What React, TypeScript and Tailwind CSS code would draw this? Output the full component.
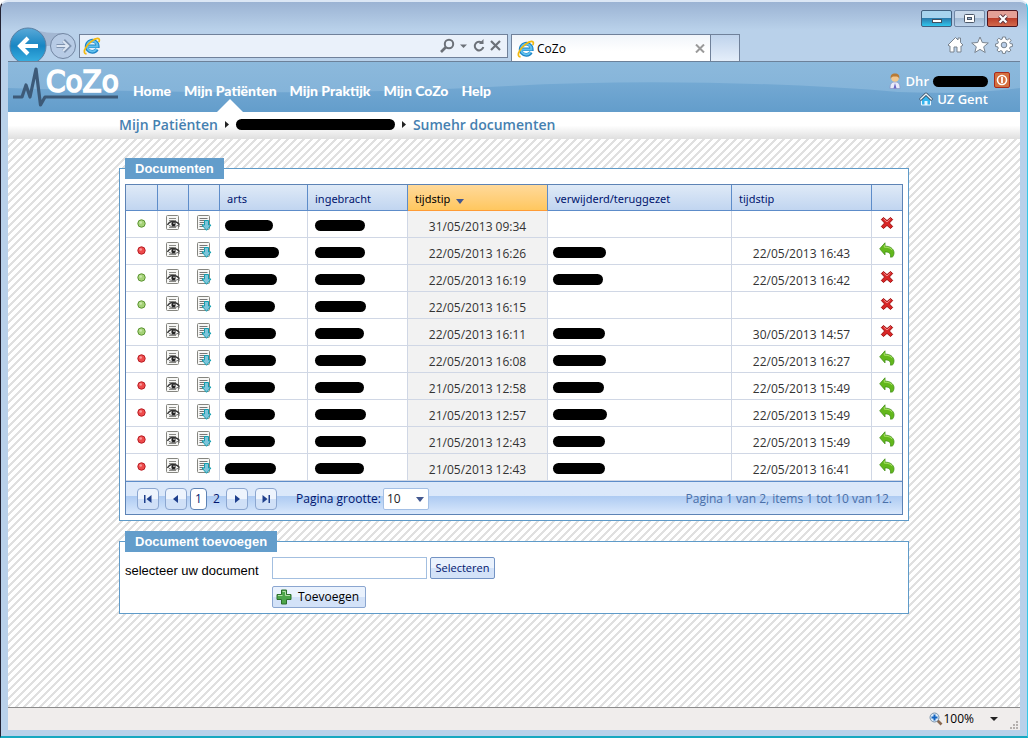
import { ReactNode } from "react";

const docs = [
  { active: true, arts: 48, by: 50, time: "31/05/2013 09:34", removed: 0, removedTime: "" },
  { active: false, arts: 54, by: 50, time: "22/05/2013 16:26", removed: 53, removedTime: "22/05/2013 16:43" },
  { active: true, arts: 52, by: 50, time: "22/05/2013 16:19", removed: 50, removedTime: "22/05/2013 16:42" },
  { active: true, arts: 50, by: 51, time: "22/05/2013 16:15", removed: 0, removedTime: "" },
  { active: true, arts: 51, by: 49, time: "22/05/2013 16:11", removed: 52, removedTime: "30/05/2013 14:57" },
  { active: false, arts: 51, by: 51, time: "22/05/2013 16:08", removed: 53, removedTime: "22/05/2013 16:27" },
  { active: false, arts: 50, by: 49, time: "21/05/2013 12:58", removed: 51, removedTime: "22/05/2013 15:49" },
  { active: false, arts: 50, by: 51, time: "21/05/2013 12:57", removed: 54, removedTime: "22/05/2013 15:49" },
  { active: false, arts: 50, by: 51, time: "21/05/2013 12:43", removed: 52, removedTime: "22/05/2013 15:49" },
  { active: false, arts: 51, by: 49, time: "21/05/2013 12:43", removed: 52, removedTime: "22/05/2013 16:41" },
];

const Redacted = ({ width }: { width: number }) => (
  <span className="block h-[11px] rounded-full bg-black" style={{ width }} />
);

const IeIcon = () => (
  <svg width="18" height="18" viewBox="0 0 18 18" fill="none" className="shrink-0">
    <path d="M14 12.2a5.6 5.6 0 1 1 .8-3H5.2" stroke="#1d84c6" strokeWidth="3.600" />
    <path d="M13.6 12a5.2 5.2 0 1 1 .8-2.6H5.2" stroke="#5fc0ee" strokeWidth="2" />
    <path d="M3.6 16.6C.8 17 .6 14 3 10.300 5.600 6 11 1.600 14.600 1.400c2-.1 2.200 1.600 1.200 3.800" stroke="#f2b90f" strokeWidth="1.700" />
  </svg>
);

const ViewIcon = () => (
  <svg width="16" height="16" viewBox="0 0 16 16" fill="none">
    <rect x="1.500" y=".5" width="12" height="14" rx="1" fill="#f7f7f5" stroke="#85857f" />
    <path d="M4 3.500h7M4 5.500h7M4 12.500h7" stroke="#8b8b87" />
    <path d="M2.500 10C4 7 6 6.200 8.500 6.500c2.500 0 4.500 1 6 3.200" stroke="#333" strokeWidth="1.400" />
    <path d="M4 10.500c3 1.500 6 1.500 10-.5v2" stroke="#666" />
    <circle cx="8.500" cy="9" r="2.200" fill="#222" />
    <circle cx="9" cy="8.300" r=".7" fill="#fff" />
  </svg>
);

const DownloadIcon = () => (
  <svg width="16" height="16" viewBox="0 0 16 16" fill="none">
    <rect x="1.500" y=".5" width="12" height="14" rx="1" fill="#f7f7f5" stroke="#85857f" />
    <path d="M3.500 3.500h8M3.500 5.500h8M3.500 7.500h5M3.500 9.500h4M3.500 11.500h4" stroke="#777" />
    <path d="M8.500 5.500h4v4.500h2.500l-4.500 5.300L6 10h2.500z" fill="#7fc4da" stroke="#0f9fb0" />
  </svg>
);

const DeleteIcon = () => (
  <svg width="14" height="14" viewBox="0 0 14 14">
    <path
      d="M3.500 1.500 7 4.600l3.500-3.100 2.200 2L9.400 7l3.300 3.500-2.200 2L7 9.400l-3.500 3.100-2.200-2L4.600 7 1.300 3.500z"
      fill="#d92626"
      stroke="#a11212"
      strokeLinejoin="round"
    />
    <path d="M3.500 2.800 7 6l3.500-3.200" stroke="#f08a8a" fill="none" />
  </svg>
);

const RestoreIcon = () => (
  <svg width="16" height="16" viewBox="0 0 16 16">
    <path
      d="M6 .8v3.400c5.500-.2 8.800 3 9 6.300.1 2-.7 3.600-1.800 4.700-.2-.2-1-.2-1.700 0 .6-3.500-1.300-5.400-5.500-5.300v3L.7 6.800z"
      fill="#63b81c"
      stroke="#44901a"
      strokeWidth=".8"
      strokeLinejoin="round"
    />
    <path d="M5.300 2.800v2.400c4-.2 6.500 1 8 3" stroke="#a9e063" fill="none" />
  </svg>
);

const StatusDot = ({ active }: { active: boolean }) => (
  <svg width="9" height="9" viewBox="0 0 9 9">
    <circle cx="4.500" cy="4.500" r="3.700" fill={active ? "#a5d277" : "#ee4b4b"} stroke={active ? "#5c9433" : "#b81f26"} />
    <circle cx="3.700" cy="3.500" r="1.300" fill={active ? "#cde8ae" : "#f89b9b"} />
  </svg>
);

const Crumb = () => (
  <svg width="4" height="7" viewBox="0 0 4 7" className="shrink-0">
    <path d="M0 0 4 3.500 0 7z" fill="#222" />
  </svg>
);

const PagerButton = ({ label, children }: { label: string; children: ReactNode }) => (
  <button
    aria-label={label}
    className="flex h-[22px] w-[22px] items-center justify-center rounded-sm border border-[#8ba6d0] bg-linear-to-b from-[#eef4fd] from-50% to-[#d0e0f7] to-50% text-[#1f3f8c]"
  >
    <svg width="8" height="8" viewBox="0 0 8 8" fill="currentColor">
      {children}
    </svg>
  </button>
);

const headCell = "border-r border-b border-[#5d8cc9] bg-linear-to-b from-[#dfeaf7] to-[#c1d5f0] px-[7px] pt-[3px] text-left font-normal text-[#00156e] last:border-r-0";
const cell = "border-r border-b border-[#d0d7e5] p-0 last:border-r-0";

const TitleBar = () => (
  <div className="flex h-[26px] justify-end gap-0.5 pt-2 pr-0.5">
    <button aria-label="Minimaliseren" className="flex h-[17px] w-[31px] items-center justify-center rounded-xs border border-[#41607f] bg-linear-to-b from-[#a7d3ee] from-45% via-[#2a76a8] via-45% to-[#2fc5ec] pt-1">
      <span className="h-1 w-2.5 border border-[#41505f] bg-white" />
    </button>
    <button aria-label="Maximaliseren" className="flex h-[17px] w-[31px] items-center justify-center rounded-xs border border-[#7187a5] bg-linear-to-b from-[#c8d8ea] from-45% via-[#a0b8d2] via-45% to-[#bdd2ea]">
      <svg width="11" height="9" viewBox="0 0 11 9">
        <rect x=".5" y=".5" width="10" height="8" rx="1" fill="#fff" stroke="#4b5768" />
        <rect x="3.500" y="3.500" width="4" height="2" fill="#9cb4cf" stroke="#4b5768" />
      </svg>
    </button>
    <button aria-label="Sluiten" className="flex h-[17px] w-[31px] items-center justify-center rounded-xs border border-[#4c1520] bg-linear-to-b from-[#e4a097] from-45% via-[#b93a28] via-45% to-[#d3694c]">
      <svg width="12" height="10" viewBox="0 0 12 10">
        <path d="m2.500 1.500 7 7m0-7-7 7" stroke="#5b3640" strokeWidth="4" />
        <path d="m2.500 1.500 7 7m0-7-7 7" stroke="#fff" strokeWidth="2.200" />
      </svg>
    </button>
  </div>
);

const BrowserBar = () => (
  <div className="flex h-[28px] items-start">
    <svg width="71" height="35" viewBox="0 0 71 35" className="-mt-[7px] shrink-0">
      <defs>
        <linearGradient id="back" x2="0" y2="1">
          <stop offset="0" stopColor="#5aa9d8" />
          <stop offset=".5" stopColor="#1886c3" />
          <stop offset="1" stopColor="#3cb4e4" />
        </linearGradient>
      </defs>
      <path d="M22 1c12 5 22 5 33 5v13H22z" fill="#a3b7d2" />
      <circle cx="20" cy="19" r="18" fill="url(#back)" stroke="#5b7fa3" />
      <circle cx="55" cy="19" r="12.500" fill="#b7cbe5" stroke="#7286a2" />
      <path d="M30 19H13m7-8-8 8 8 8" stroke="#fff" strokeWidth="4" fill="none" />
      <path d="M48.500 19H61m-5.500-5.500L61 19l-5.500 5.500" stroke="#7e92ae" strokeWidth="4" fill="none" />
      <path d="M48.500 19H60m-5-5 5.200 5-5.200 5" stroke="#dce6f3" strokeWidth="2" fill="none" />
    </svg>
    <div className="flex h-6 min-w-0 flex-1 items-center border border-[#70819a] bg-[#eaf1fa] pr-[5px] pl-[3px]">
      <IeIcon />
      <input aria-label="Adres" className="min-w-0 flex-1 bg-transparent px-1 text-xs outline-none" />
      <svg width="62" height="16" viewBox="0 0 62 16" fill="none" stroke="#6c7178" strokeWidth="2">
        <circle cx="9" cy="6" r="4.200" />
        <path d="m6 9-5 5" strokeWidth="2.600" />
        <path d="M20 6.500h7l-3.500 3.500z" fill="#6c7178" stroke="none" />
        <path d="M42.500 5.500A4.300 4.300 0 1 0 43.300 9" />
        <path d="M39 6h4.500V1z" fill="#6c7178" stroke="none" />
        <path d="m51 3 9 9m0-9-9 9" strokeWidth="2.200" />
      </svg>
    </div>
    <div className="ml-[3px] flex h-7 w-[200px] items-center border border-b-0 border-[#70819a] bg-linear-to-b from-[#f1f5fa] to-white to-60% px-[5px]">
      <IeIcon />
      <span className="ml-0.5 flex-1 font-['Open_Sans',sans-serif] text-xs text-black">CoZo</span>
      <button aria-label="Tabblad sluiten">
        <svg width="10" height="9" viewBox="0 0 10 9" stroke="#9a9a9a" strokeWidth="2">
          <path d="m1 .5 8 8m0-8-8 8" />
        </svg>
      </button>
    </div>
    <button aria-label="Nieuw tabblad" className="-ml-px h-7 w-[30px] border border-b-0 border-[#70819a] bg-linear-to-b from-[#bfd3ec] to-[#e6effa]" />
    <div className="flex w-[280px] justify-end pt-0.5 pr-[7px]">
      <svg width="66" height="18" viewBox="0 0 66 18" fill="#fff" stroke="#78838f" strokeLinejoin="round">
        <path d="m1 9 7.500-7.500 2.500 2.500v-2h2.500v4.500L16 9l-1.500 1H14v6h-4v-5H7v5H3v-6H2z" />
        <path d="m33 1 2.300 5.500 6 .5-4.600 3.800 1.500 5.700L33 13.400l-5.200 3.100 1.500-5.700L24.700 7l6-.5z" />
        <g transform="translate(57 9)">
          <path d="M-1.500-8h3l.4 2.300 1.500.6 1.900-1.400L7.100-4.600 5.700-2.700l.5 1.300 2.200.3v2.600l-2.200.4-.6 1.500 1.300 1.800L5 7 3.100 5.700l-1.400.6L1.300 8.400h-2.700l-.4-2.200-1.500-.6L-5.100 7-7 5.100l1.300-1.900-.6-1.400-2.100-.3v-2.600l2.200-.4.6-1.500L-7-4.900-5.100-6.800l1.900 1.400 1.400-.5z" />
          <circle r="2.800" fill="#b8cde8" />
        </g>
      </svg>
    </div>
  </div>
);

const SiteHeader = () => (
  <header className="relative flex h-[50px] items-start justify-between bg-linear-to-b from-[#8cb9dc] to-[#7fb0d7] font-['Lato',sans-serif] text-white">
    <svg className="absolute inset-0 h-full w-full" viewBox="0 0 1012 50" preserveAspectRatio="none">
      <defs>
        <linearGradient id="wave" x2="0" y2="1">
          <stop offset="0" stopColor="#74a9d3" />
          <stop offset="1" stopColor="#639dcb" />
        </linearGradient>
      </defs>
      <path d="M0 26C200 32 360 32 500 24s300-2 390 6c50 2 90 0 122-4v24H0z" fill="url(#wave)" />
    </svg>
    <div className="relative flex h-full">
      <svg width="112" height="50" viewBox="0 0 112 50" className="mr-[13px] shrink-0">
        <path d="M5 35h9l4-12 4 12 6-28 4.500 36 4.500-8h73" stroke="#3d5a78" strokeWidth="3.200" fill="none" strokeLinejoin="round" />
        <text x="38" y="30" fontFamily="'DejaVu Sans Condensed', 'DejaVu Sans', sans-serif" fontSize="31" fill="#fff" stroke="#fff" strokeWidth="1.600">
          CoZo
        </text>
      </svg>
      <nav className="pt-5">
        <ul className="flex h-[30px] gap-[13px] text-sm leading-[18px] font-black">
          <li><a href="#home">Home</a></li>
          <li className="relative">
            <a href="#patienten">Mijn Patiënten</a>
            <svg width="26" height="13" viewBox="0 0 26 13" className="absolute bottom-0 left-1/2 -translate-x-1/2">
              <path d="M0 13 13 0l13 13z" fill="#fff" />
            </svg>
          </li>
          <li><a href="#praktijk">Mijn Praktijk</a></li>
          <li><a href="#cozo">Mijn CoZo</a></li>
          <li><a href="#help">Help</a></li>
        </ul>
      </nav>
    </div>
    <div className="relative flex gap-1.5 pt-2.5 pr-2.5 font-['Open_Sans',sans-serif] text-[13px] leading-[18px] font-semibold">
      <div>
        <div className="flex items-center justify-end gap-1">
          <svg width="14" height="16" viewBox="0 0 14 16">
            <path d="M2 15.500c0-4 1-6.500 5-6.500s5 2.500 5 6.500z" fill="#e8ebfa" stroke="#8993c4" strokeWidth=".7" />
            <path d="m7 10-1.500 5.500h3z" fill="#6b65c4" />
            <circle cx="7" cy="5" r="3.800" fill="#f3c78e" />
            <path d="M2.800 6C2 2 4 .5 7 .5s5 1.500 4.200 5.500c-.7-2-1.200-2.500-4.200-2.500S3.500 4 2.800 6z" fill="#b87a35" />
          </svg>
          Dhr
          <Redacted width={55} />
        </div>
        <div className="flex items-center justify-end gap-1">
          <svg width="14" height="14" viewBox="0 0 14 14" strokeLinejoin="round">
            <path d="M2.500 7.500V13h9V7.500L7 3z" fill="#35b4ee" stroke="#e8f6ff" />
            <path d="M1 8 7 2l6 6" fill="none" stroke="#3a4a5c" strokeWidth="3" />
            <path d="M1.300 7.500 7 2l5.700 5.500" fill="none" stroke="#eaf7ff" strokeWidth="1.400" />
            <path d="M5.500 13V9h3v4z" fill="#e8f6ff" />
          </svg>
          <a href="#gent">UZ Gent</a>
        </div>
      </div>
      <button aria-label="Afmelden" className="h-4 w-4">
        <svg width="16" height="16" viewBox="0 0 16 16" fill="none">
          <rect x=".5" y=".5" width="15" height="15" rx="1.500" fill="#d4703f" stroke="#a92a1c" />
          <circle cx="8" cy="8" r="4.500" stroke="#fff" strokeWidth="1.600" />
          <path d="M8 5v6" stroke="#fff" strokeWidth="1.800" />
        </svg>
      </button>
    </div>
  </header>
);

const Documents = () => (
  <fieldset className="border border-[#5f9bc9] bg-white px-[5px] pb-[5px]">
    <legend className="bg-[#639dcb] px-2.5 font-['Liberation_Sans',sans-serif] text-[13px] leading-[21px] font-bold text-white">Documenten</legend>
    <div className="mt-[5px] border border-[#5d83b5]">
      <table className="w-full table-fixed border-separate border-spacing-0 font-['Open_Sans',sans-serif] text-xs leading-4 text-[#333]">
        <colgroup>
          <col className="w-8" />
          <col className="w-[31px]" />
          <col className="w-[31px]" />
          <col className="w-[88px]" />
          <col className="w-[100px]" />
          <col className="w-[140px]" />
          <col />
          <col className="w-[140px]" />
          <col className="w-[30px]" />
        </colgroup>
        <thead className="font-['Noto_Sans',sans-serif] text-[11px]">
          <tr className="h-[26px]">
            <th className={headCell} />
            <th className={headCell} />
            <th className={headCell} />
            <th className={headCell}>arts</th>
            <th className={headCell}>ingebracht</th>
            <th className="border-r border-b border-r-[#5d8cc9] border-b-[#ff9b35] bg-linear-to-b from-[#ffd999] to-[#ffc75e] px-[7px] pt-[3px] text-left font-normal text-black">
              <span className="flex items-center gap-1.5">
                tijdstip
                <svg width="8" height="5" viewBox="0 0 8 5" className="mt-1">
                  <path d="M0 0h8L4 5z" fill="#42578f" />
                </svg>
              </span>
            </th>
            <th className={headCell}>verwijderd/teruggezet</th>
            <th className={headCell}>tijdstip</th>
            <th className={headCell} />
          </tr>
        </thead>
        <tbody>
          {docs.map((doc, i) => (
            <tr key={i} className="h-[27px]">
              <td className={cell}>
                <span className="flex justify-center pb-0.5"><StatusDot active={doc.active} /></span>
              </td>
              <td className={cell}>
                <button aria-label="Bekijken" className="flex w-full justify-center pb-0.5"><ViewIcon /></button>
              </td>
              <td className={cell}>
                <button aria-label="Downloaden" className="flex w-full justify-center pb-0.5"><DownloadIcon /></button>
              </td>
              <td className={`${cell} pt-0.5 pl-[5px]`}><Redacted width={doc.arts} /></td>
              <td className={`${cell} pt-0.5 pl-[7px]`}><Redacted width={doc.by} /></td>
              <td className={`${cell} bg-[#f2f2f2] pt-1.5 text-center`}>{doc.time}</td>
              <td className={`${cell} pt-0.5 pl-[5px]`}>{doc.removed > 0 && <Redacted width={doc.removed} />}</td>
              <td className={`${cell} pt-1.5 text-center`}>{doc.removedTime}</td>
              <td className={cell}>
                <button aria-label={doc.active ? "Verwijderen" : "Terugzetten"} className="flex w-full justify-center pb-0.5">
                  {doc.active ? <DeleteIcon /> : <RestoreIcon />}
                </button>
              </td>
            </tr>
          ))}
        </tbody>
      </table>
      <div className="flex h-[33px] items-center border-t border-[#5d8cc9] bg-linear-to-b from-[#dbe8fa] from-45% via-[#aecbf2] via-45% to-[#d9e8fc] pt-px pr-2.5 pl-[11px] font-['Open_Sans',sans-serif] text-xs text-[#00156e]">
        <div className="flex items-center gap-1.5">
          <PagerButton label="Eerste"><path d="M0 0h1.500v8H0zM7.500 0v8L2.500 4z" /></PagerButton>
          <PagerButton label="Vorige"><path d="M6 0v8L1 4z" /></PagerButton>
        </div>
        <span className="ml-[3px] flex h-[22px] w-[17px] items-center justify-center rounded-sm border border-[#5d83b5] bg-white">1</span>
        <a href="#2" className="w-[19px] text-center">2</a>
        <div className="flex items-center gap-[7px]">
          <PagerButton label="Volgende"><path d="M2 0v8l5-4z" /></PagerButton>
          <PagerButton label="Laatste"><path d="M6.500 0H8v8H6.500zM.5 0v8l5-4z" /></PagerButton>
        </div>
        <label htmlFor="size" className="mr-[2px] ml-[19px]">Pagina grootte:</label>
        <div className="relative">
          <select id="size" className="h-[22px] w-[46px] appearance-none rounded-xs border border-[#a3bfe5] bg-white px-[3px] text-xs text-[#222]">
            <option>10</option>
            <option>20</option>
          </select>
          <svg width="8" height="5" viewBox="0 0 8 5" className="pointer-events-none absolute top-[9px] right-[5px]">
            <path d="M0 0h8L4 5z" fill="#42578f" />
          </svg>
        </div>
        <span className="ml-auto text-[#4a6fa8]">Pagina 1 van 2, items 1 tot 10 van 12.</span>
      </div>
    </div>
  </fieldset>
);

const AddDocument = () => (
  <fieldset className="border border-[#5f9bc9] bg-white px-[5px] pb-[5px]">
    <legend className="bg-[#639dcb] px-2.5 font-['Liberation_Sans',sans-serif] text-[13px] leading-[21px] font-bold text-white">Document toevoegen</legend>
    <div className="mt-[5px] flex items-center">
      <label htmlFor="file" className="w-[147px] pt-1.5 font-['Liberation_Sans',sans-serif] text-[13px] leading-4 text-black">selecteer uw document</label>
      <input id="file" className="h-[22px] w-[155px] border border-[#a3bfe0] bg-white px-1 text-xs" />
      <button className="ml-[3px] h-[22px] w-[65px] rounded-xs border border-[#7393c4] bg-linear-to-b from-[#eaf2fd] from-50% to-[#d3e2f8] to-50% font-['Open_Sans',sans-serif] text-[11px] leading-4 text-[#00156e]">Selecteren</button>
    </div>
    <button className="mt-[7px] ml-[147px] flex h-[22px] w-[94px] items-center gap-1.5 rounded-xs border border-[#8ba6d0] bg-linear-to-b from-[#eaf2fd] from-50% to-[#d3e2f8] to-50% px-[3px] font-['Open_Sans',sans-serif] text-xs text-black">
      <svg width="16" height="16" viewBox="0 0 16 16">
        <path d="M5.500 1h5v4.500H15v5h-4.500V15h-5v-4.500H1v-5h4.500z" fill="#4da64a" stroke="#2c6e2c" strokeLinejoin="round" />
        <path d="M6.500 2.500h3v4H14M2 6.500h4.500" stroke="#b5dfa9" fill="none" />
      </svg>
      Toevoegen
    </button>
  </fieldset>
);

const App = () => {
  return (
    <div className="flex min-h-screen flex-col rounded-t-lg border-x border-y-2 border-t-[#dce7f5] border-r-[#35c8e8] border-b-[#18a8c0] border-l-[#223] bg-linear-to-b from-[#9bb3d3] to-[#b9d1ea] to-[28px] px-[7px] pb-1.5">
      <TitleBar />
      <div className="pt-1.5"><BrowserBar /></div>
      <div className="-mt-px flex flex-1 flex-col border-t border-[#6c8199] bg-white">
        <SiteHeader />
        <div className="bg-linear-to-b from-white from-50% to-[#dfdfdf]">
          <div className="mx-auto flex h-[27px] max-w-[790px] items-center gap-[7px] pb-0.5 font-['Open_Sans',sans-serif] text-sm font-semibold text-[#4580b0]">
            <a href="#patienten">Mijn Patiënten</a>
            <Crumb />
            <Redacted width={159} />
            <Crumb />
            <span>Sumehr documenten</span>
          </div>
        </div>
        <main className="flex-1 bg-[linear-gradient(135deg,#e0e0e0_0%_7%,#fff_7%_43%,#e0e0e0_43%_57%,#fff_57%_93%,#e0e0e0_93%)] bg-[size:8px_8px] pt-[19px]">
          <div className="mx-auto flex max-w-[790px] flex-col gap-2.5">
            <Documents />
            <AddDocument />
          </div>
        </main>
        <footer className="flex h-[23px] items-center justify-end border-t border-[#8b8b8b] bg-[#f0edec] font-['Open_Sans',sans-serif] text-xs text-black">
          <svg width="14" height="14" viewBox="0 0 14 14" fill="none">
            <path d="m8.500 8.500 4 4" stroke="#8a6a52" strokeWidth="2.600" />
            <circle cx="5.500" cy="5.500" r="4.500" fill="#dcebf8" stroke="#7b93ab" />
            <path d="M5.500 2.500v6m-3-3h6" stroke="#1565c0" strokeWidth="2" />
          </svg>
          <span>100%</span>
          <svg width="8" height="4" viewBox="0 0 8 4" className="ml-4">
            <path d="M0 0h8L4 4z" fill="#222" />
          </svg>
          <svg width="8" height="8" viewBox="0 0 8 8" className="mt-3 mr-0.5 ml-3" fill="#b5b0ae">
            <path d="M6 0h2v2H6zM3 3h2v2H3zM6 3h2v2H6zM0 6h2v2H0zM3 6h2v2H3zM6 6h2v2H6z" />
          </svg>
        </footer>
      </div>
    </div>
  );
};

export default App;
